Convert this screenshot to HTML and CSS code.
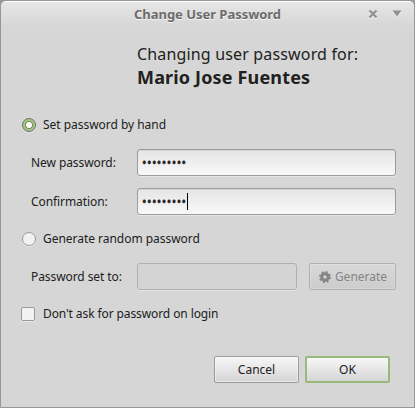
FILE: index.html
```
<!DOCTYPE html>
<html lang="en">
  <head>
    <meta charset="UTF-8" />
    <meta name="viewport" content="width=device-width, initial-scale=1.0" />
    <title>Change User Password</title>
    <link rel="stylesheet" href="styles.css">
  </head>
  <body>
    <div class="window">
      <!-- title bar -->
      <div class="titlebar">
        <div class="title">Change User Password</div>
        <div class="controls">
          <svg width="10" height="10" viewBox="0 0 10 10">
            <path d="M1.5 2.5l7 7M8.5 2.5l-7 7" stroke="#f4f4f4" stroke-width="2.4" />
            <path d="M1.5 1.5l7 7M8.5 1.5l-7 7" stroke="#929292" stroke-width="2.4" />
          </svg>
          <svg width="10" height="10" viewBox="0 0 10 10">
            <path d="M0.5 2.5h9L5 8.5z" fill="#f4f4f4" />
            <path d="M0.5 1.5h9L5 7.5z" fill="#929292" />
          </svg>
        </div>
      </div>

      <div class="heading">
        <div>Changing user password for:</div>
        <div class="user-name">Mario Jose Fuentes</div>
      </div>

      <!-- form -->
      <div class="form">
        <label class="option"><span class="radio checked"></span><span class="text">Set password by hand</span></label>
        <div class="row">
          <span class="label">New password:</span>
          <div class="field"><span class="dots">•••••••••</span></div>
        </div>
        <div class="row">
          <span class="label">Confirmation:</span>
          <div class="field"><span class="dots">•••••••••</span><span class="caret"></span></div>
        </div>
        <label class="option"><span class="radio"></span><span class="text">Generate random password</span></label>
        <div class="row">
          <span class="label">Password set to:</span>
          <div class="field disabled"></div>
          <button class="generate" disabled>
            <svg width="12" height="12" viewBox="0 0 12 12">
              <circle cx="6" cy="6" r="3.3" fill="none" stroke="#858585" stroke-width="3" />
              <circle cx="6" cy="6" r="5.2" fill="none" stroke="#858585" stroke-width="1.6" stroke-dasharray="2.05 2.034" />
            </svg>
            Generate
          </button>
        </div>
        <label class="option"><span class="checkbox"></span><span class="text tight">Don't ask for password on login</span></label>
      </div>

      <div class="buttons">
        <button>Cancel</button>
        <button class="default">OK</button>
      </div>
    </div>
  </body>
</html>
```

FILE: styles.css
```
* {
  box-sizing: border-box;
}

body {
  margin: 0;
  background: #999;
  font-family: "Noto Sans", sans-serif;
  font-size: 12px;
  color: #212121;
}

.window {
  width: 415px;
  height: 408px;
  border: 1px solid #979797;
  border-radius: 6px 6px 0 0;
  background: #d6d6d6;
  overflow: hidden;
}

.titlebar {
  display: grid;
  grid-template-columns: 1fr auto;
  align-items: center;
  height: 26px;
  padding: 0 12px 2px 133px;
  border-top: 1px solid #fff;
  border-radius: 5px 5px 0 0;
  background: linear-gradient(#e6e6e6, #d6d6d6);
}

.title {
  font-size: 13px;
  line-height: 18px;
  font-weight: bold;
  letter-spacing: -0.03px;
  color: #6c6c6c;
  text-shadow: 0 1px #f4f4f4;
  white-space: nowrap;
}

.controls {
  display: flex;
  gap: 14px;
}

.heading {
  height: 86px;
  padding: 16px 0 0 136px;
  font-size: 16px;
  line-height: 23px;
  letter-spacing: 0.16px;
}

.user-name {
  font-size: 18px;
  font-weight: bold;
}

.form {
  display: flex;
  flex-direction: column;
  gap: 12px;
  padding: 0 18px 0 20px;
}

.option {
  display: flex;
  align-items: center;
  height: 24px;
}

.text {
  padding-bottom: 2px;
  letter-spacing: -0.03px;
}

.text.tight {
  letter-spacing: -0.1px;
}

.radio,
.checkbox {
  width: 14px;
  height: 14px;
  margin-right: 8px;
  border: 1px solid #999;
  background: #f2f2f2;
  box-shadow: 0 1px #e6e6e6;
}

.radio {
  margin: 0 7px 0 1px;
  border-radius: 50%;
}

.radio.checked {
  border-color: #6f6f6f;
  background: radial-gradient(circle, #fff 0 2.7px, #799461 3.2px 3.8px, #a5c784 4.4px);
}

.checkbox {
  border-radius: 2px;
}

.row {
  display: flex;
  align-items: center;
  height: 27px;
  padding-left: 10px;
}

.label {
  width: 106px;
  letter-spacing: -0.08px;
}

.field {
  display: flex;
  align-items: center;
  flex: 1;
  height: 27px;
  padding-left: 4px;
  border: 1px solid #9b9b9b;
  border-radius: 3px;
  background: linear-gradient(#e5e5e5, #f8f8f8);
  box-shadow: 0 1px #e6e6e6, inset 0 1px #d4d4d4;
}

.field.disabled {
  flex: 0 0 160px;
  border-color: #b0b0b0;
  background: #d4d4d4;
  box-shadow: 0 1px #e3e3e3;
}

.dots {
  letter-spacing: 0.44px;
  -webkit-text-stroke: 0.4px #212121;
}

.caret {
  width: 1px;
  height: 17px;
  background: #000;
}

button {
  display: flex;
  align-items: center;
  justify-content: center;
  width: 85px;
  height: 27px;
  padding: 0;
  border: 1px solid #9b9b9b;
  border-radius: 2px;
  background: linear-gradient(#f7f7f7, #d5d5d5);
  box-shadow: inset 0 0 0 1px rgba(255, 255, 255, 0.4);
  font: inherit;
  color: #212121;
}

button.default {
  border: 2px solid #9ab87c;
  box-shadow: none;
}

button.generate {
  gap: 4px;
  width: 87px;
  margin-left: 12px;
  padding-left: 1px;
  border-color: #b0b0b0;
  background: linear-gradient(#d9d9d9, #cccccc);
  box-shadow: inset 0 0 0 1px rgba(255, 255, 255, 0.2);
  color: #858585;
}

.buttons {
  display: flex;
  justify-content: flex-end;
  gap: 6px;
  padding: 30px 24px 0 0;
}
```
